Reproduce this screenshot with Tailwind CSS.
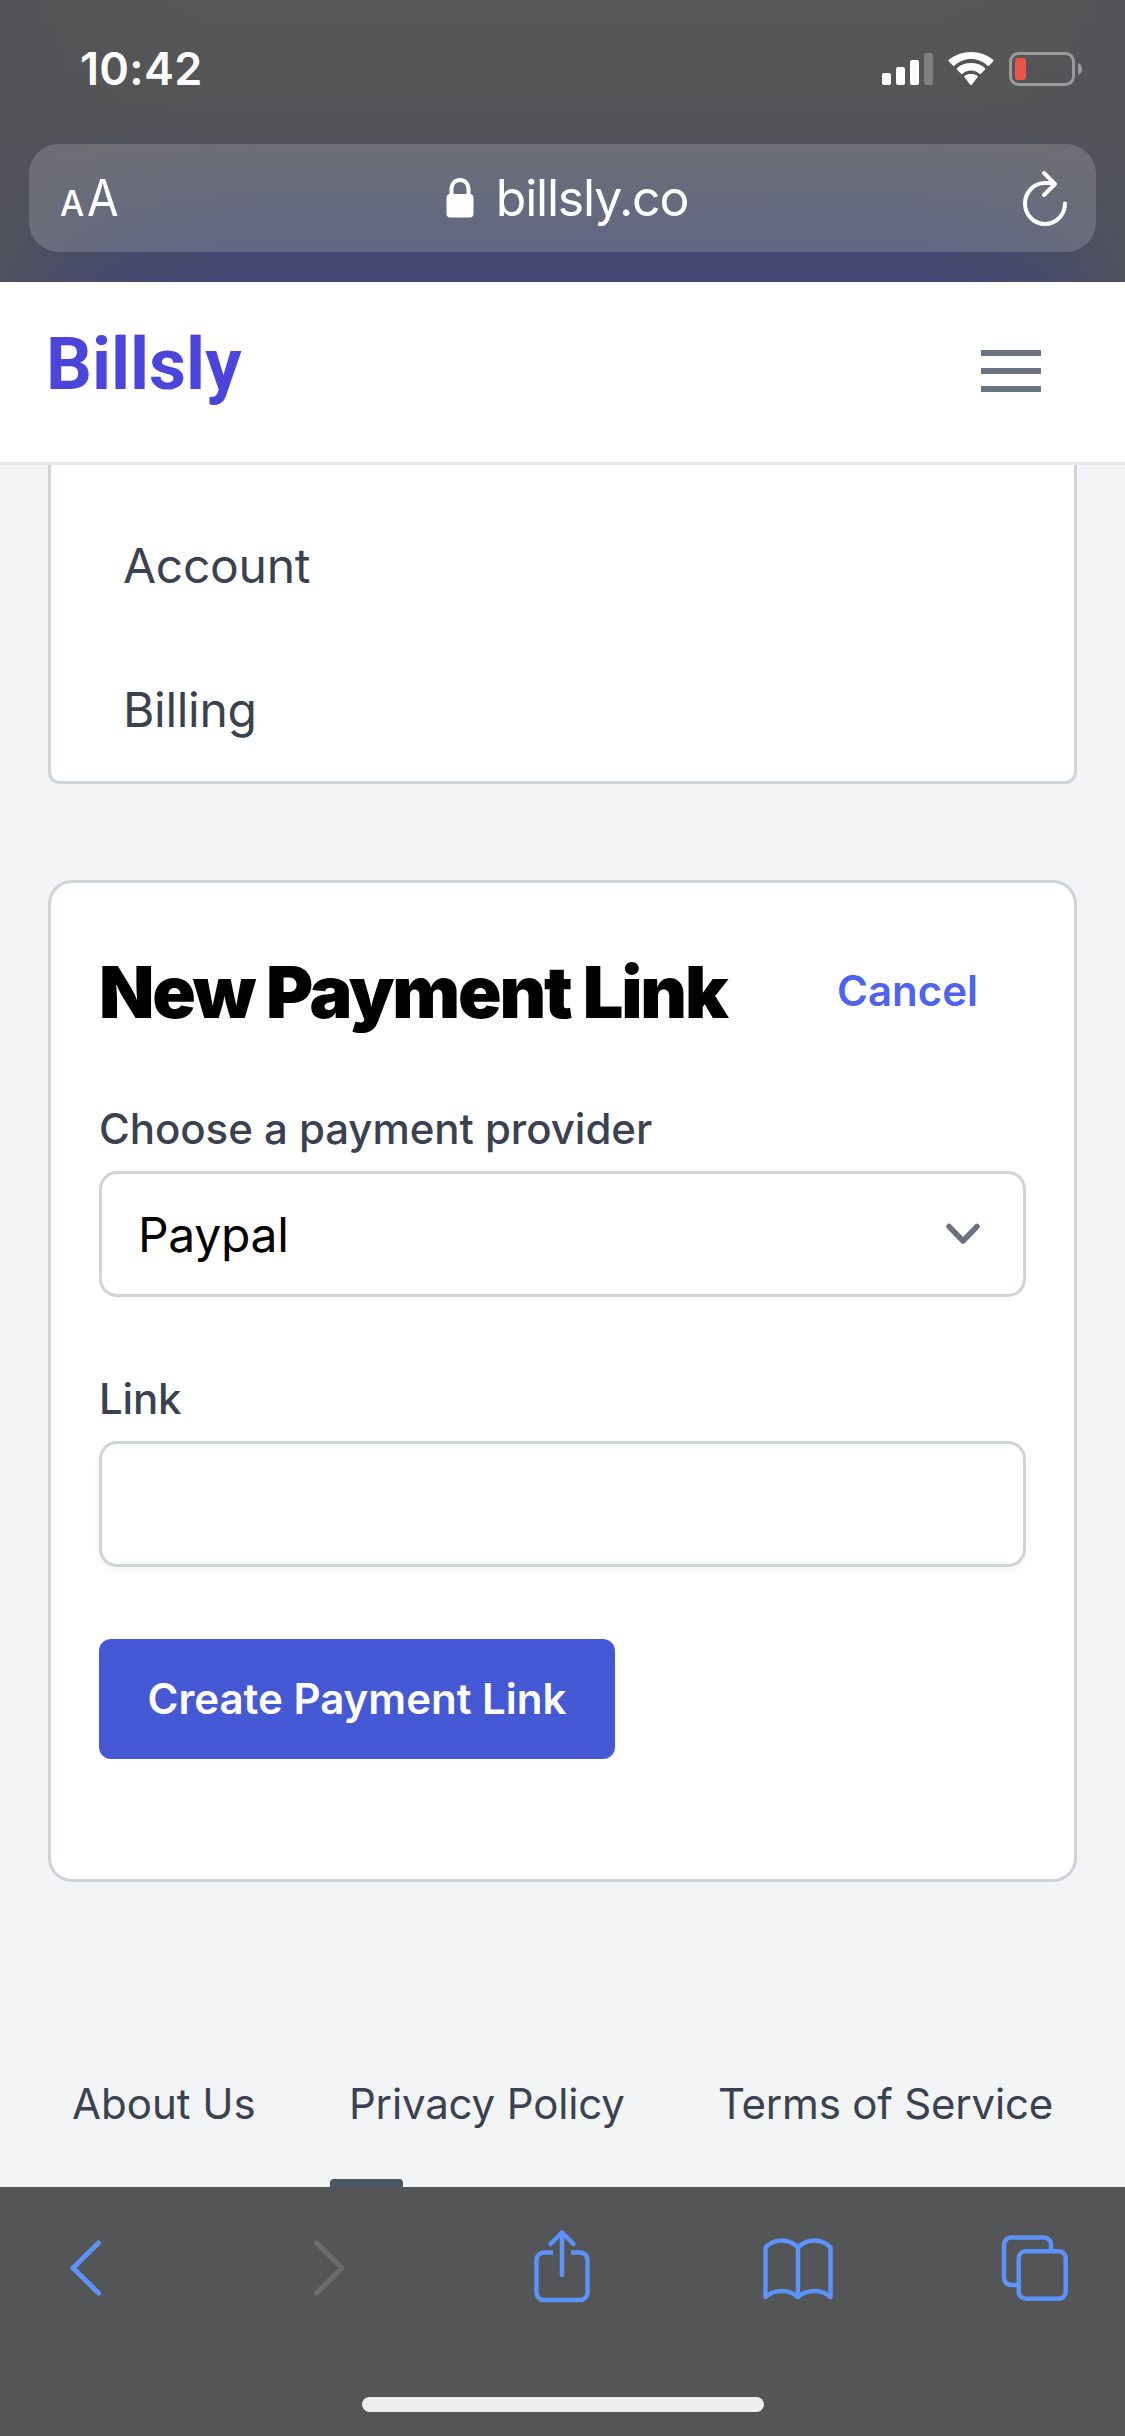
<!DOCTYPE html>
<html lang="en">
<head>
<meta charset="utf-8">
<title>Billsly</title>
<script src="https://cdn.jsdelivr.net/npm/@tailwindcss/browser@4"></script>
</head>
<body class="w-[1125px] h-[2436px] overflow-hidden flex flex-col bg-[#f3f4f6] font-[Inter,sans-serif] text-[#3a4252]">

<!-- Status bar and address bar -->
<header class="h-[282px] shrink-0 flex flex-col text-white bg-[linear-gradient(90deg,#525358d0_0%,#52535880_5%,#52535830_12%,#52535800_20%,#52535800_82%,#52535830_90%,#52535880_96%,#525358d0_100%),linear-gradient(180deg,#575757_0%,#555557_36%,#51535c_50%,#454b6d_86%,#424775_100%)]">
  <div class="h-[144px] pl-[80px] pr-[43px] flex justify-between">
    <div class="mt-[42px] text-[45px] leading-[54px] font-semibold tracking-[0.3px]">10:42</div>
    <div class="flex mt-[52px] h-[36px] items-start">
      <svg class="w-[51px] h-[34px]" viewBox="0 0 51 34" fill="#fff"><rect x="0" y="21" width="9" height="12" rx="2"/><rect x="14" y="15" width="9" height="18" rx="2"/><rect x="28" y="8" width="9" height="25" rx="2"/><rect x="42" y="1" width="9" height="32" rx="2" opacity=".25"/></svg>
      <svg class="ml-[15px] w-[46px] h-[34px]" viewBox="0 0 46 34" fill="#fff"><path d="M23 7c6.300 0 12 2.500 16.400 6.500.6.500 1.200.5 1.700 0l4-4c.5-.6.5-1.100 0-1.700C39.200 3 31.500 0 23 0S6.800 3 .9 7.800c-.5.600-.5 1.100 0 1.700l4 4c.5.500 1.100.5 1.700 0C11 9.500 16.700 7 23 7z"/><path d="M23 18.500c3.200 0 6.100 1.200 8.300 3.200.5.500 1.100.5 1.600 0l4-4c.5-.5.5-1.100 0-1.700C33.300 12.800 28.400 11 23 11s-10.300 1.800-13.900 5c-.5.6-.5 1.200 0 1.700l4 4c.5.500 1.100.5 1.600 0 2.200-2 5.100-3.200 8.300-3.200z"/><path d="M29.500 25.300c.5-.5.500-1 0-1.400C27.700 22.500 25.500 22 23 22s-4.700.5-6.500 1.900c-.5.400-.5.900 0 1.400l5.500 7.200c.6.700 1.400.7 2 0z"/></svg>
      <svg class="ml-[15px] w-[73px] h-[35px]" viewBox="0 0 73 35"><rect x="1.500" y="1.500" width="63" height="31" rx="8" fill="none" stroke="#9a9a9b" stroke-width="3"/><rect x="6" y="6" width="11" height="22" rx="3" fill="#eb5545"/><path d="M69 11c2.600 1 4 3.500 4 6s-1.400 5-4 6z" fill="#9a9a9b"/></svg>
    </div>
  </div>
  <div class="mx-[29px] h-[108px] rounded-[30px] bg-white/16 flex items-center justify-between pl-[31px] pr-[28px]">
    <div class="w-[267px] flex items-baseline pt-[5px]">
      <span class="text-[36px] leading-[60px] inline-block w-[27px] font-medium origin-left scale-x-95">A</span><span class="text-[51px] leading-[60px] inline-block origin-left scale-x-90">A</span>
    </div>
    <div class="flex items-center">
      <svg class="w-[28px] h-[40px]" viewBox="0 0 28 40"><path d="M5.500 18V11.500C5.500 5.500 9 2 14 2s8.500 3.500 8.500 9.500V18" fill="none" stroke="#fff" stroke-width="4"/><rect x="0.500" y="16" width="27" height="23.500" rx="4" fill="#fff"/></svg>
      <span class="ml-[22px] text-[50px] leading-[60px] tracking-[-1.200px] whitespace-nowrap">billsly.co</span>
    </div>
    <div class="w-[261px] flex justify-end">
      <svg class="w-[46px] h-[56px]" viewBox="0 0 46 56" fill="none" stroke="#fff" stroke-width="4" stroke-linecap="round" stroke-linejoin="round"><path d="M43 33.500A20 20.500 0 1 1 23 13h9M22 3l11 11L22 25"/></svg>
    </div>
  </div>
</header>

<!-- Site navigation -->
<nav class="h-[183px] shrink-0 bg-white border-b-[3px] border-[#e5e7eb] flex justify-between pl-[46px] pr-[84px]">
  <a class="mt-[41px] h-[84px] font-[Roboto,sans-serif] font-bold text-[72px] leading-[84px] text-[#4b45dc]">Billsly</a>
  <button class="mt-[68px] w-[60px] h-[42px] flex flex-col justify-between"><span class="h-[6px] w-full bg-[#6b7280]"></span><span class="h-[6px] w-full bg-[#6b7280]"></span><span class="h-[6px] w-full bg-[#6b7280]"></span></button>
</nav>

<main class="px-[48px] shrink-0 h-[1582px]">
  <section class="h-[319px] bg-white border-[3px] border-t-0 border-[#d1d3db] rounded-b-[12px] pl-[72px] pt-[65px] text-[48px] leading-[72px] tracking-[-0.3px]">
    <div>Account</div>
    <div class="mt-[72px]">Billing</div>
  </section>

  <section class="mt-[96px] h-[1002px] bg-white border-[3px] border-[#d1d3db] rounded-[24px] px-[48px] pt-[72px] flex flex-col">
    <div class="flex justify-between items-center h-[72px] pr-[48px]">
      <h1 class="pt-[2px] text-[72px] leading-[72px] font-black tracking-[-2.200px] text-black whitespace-nowrap">New Payment Link</h1>
      <a class="text-[42px] leading-[60px] font-semibold text-[#5063ee]">Cancel</a>
    </div>
    <label class="mt-[72px] text-[42px] leading-[60px] font-medium tracking-[-0.050px]">Choose a payment provider</label>
    <div class="mt-[12px] h-[126px] shrink-0 border-[3px] border-[#d1d3db] rounded-[18px] flex items-center justify-between pl-[36px] pr-[42px] text-[48px] leading-[72px] text-black">
      <span class="pt-[2px] tracking-[-0.300px]">Paypal</span>
      <svg class="w-[36px] h-[24px]" viewBox="0 0 36 24" fill="none" stroke="#6b7280" stroke-width="5.500" stroke-linecap="round" stroke-linejoin="round"><path d="M4 4.500l14 14.500L32 4.500"/></svg>
    </div>
    <label class="mt-[72px] text-[42px] leading-[60px] font-medium tracking-[-0.200px]">Link</label>
    <div class="mt-[12px] h-[126px] shrink-0 border-[3px] border-[#d1d3db] rounded-[18px] shadow-[0_3px_6px_rgba(0,0,0,0.05)]"></div>
    <button class="mt-[72px] w-[516px] h-[120px] shrink-0 rounded-[12px] bg-[#4659d5] text-white text-[42px] leading-[60px] font-semibold whitespace-nowrap">Create Payment Link</button>
  </section>
</main>

<footer class="h-[140px] shrink-0 flex flex-col justify-between">
  <div class="flex justify-between pl-[72px] pr-[72px] mt-[27px] text-[42px] leading-[60px] whitespace-nowrap">
    <a>About Us</a><a class="tracking-[-0.150px]">Privacy Policy</a><a class="tracking-[-0.200px]">Terms of Service</a>
  </div>
  <div class="ml-[330px] w-[73px] h-[8px] rounded-t-[4px] bg-[#4b5563]"></div>
</footer>

<!-- Browser toolbar -->
<div class="h-[249px] shrink-0 bg-[#545556] flex flex-col items-center text-[#5b93f8]">
  <div class="w-full h-[162px] pl-[69px] pt-[42px] flex items-start">
    <svg class="w-[34px] h-[76px]" viewBox="0 0 34 76" fill="none" stroke="currentColor" stroke-width="5" stroke-linecap="round" stroke-linejoin="round"><path d="M29.500 14L4 39l25.500 25"/></svg>
    <svg class="ml-[209px] w-[34px] h-[76px] text-[#6b6b6d]" viewBox="0 0 34 76" fill="none" stroke="currentColor" stroke-width="5" stroke-linecap="round" stroke-linejoin="round"><path d="M4.500 14L30 39 4.500 64"/></svg>
    <svg class="ml-[187px] w-[58px] h-[76px]" viewBox="0 0 58 76" fill="none" stroke="currentColor" stroke-width="4.500" stroke-linecap="round" stroke-linejoin="round"><path stroke-linecap="butt" d="M20 23.500H11a7.500 7.500 0 0 0-7.500 7.500v32.500A7.500 7.500 0 0 0 11 71h36a7.500 7.500 0 0 0 7.500-7.500V31a7.500 7.500 0 0 0-7.500-7.500h-9"/><path d="M29 46V4M17.500 15L29 3.500 40.500 15"/></svg>
    <svg class="ml-[171px] w-[72px] h-[76px]" viewBox="0 0 72 76" fill="none" stroke="currentColor" stroke-width="4.500" stroke-linecap="round" stroke-linejoin="round"><path d="M36 18.500C27 9 12 9 3.500 18.500v49.500c8.500-8 23.500-8 32.500 0 9-8 24-8 32.500 0V18.500C60 9 45 9 36 18.500zM36 18.500v49.500"/></svg>
    <svg class="ml-[167px] w-[68px] h-[76px]" viewBox="0 0 68 76" fill="none" stroke="currentColor" stroke-width="4.500"><rect x="17.700" y="22.200" width="47" height="47.500" rx="7"/><path d="M17.700 56H10a7 7 0 0 1-7-7V15.500a7 7 0 0 1 7-7h33a7 7 0 0 1 7 7v6.700"/></svg>
  </div>
  <div class="mt-[48px] w-[402px] h-[15px] rounded-full bg-[#eeeeee]"></div>
</div>
</body>
</html>
